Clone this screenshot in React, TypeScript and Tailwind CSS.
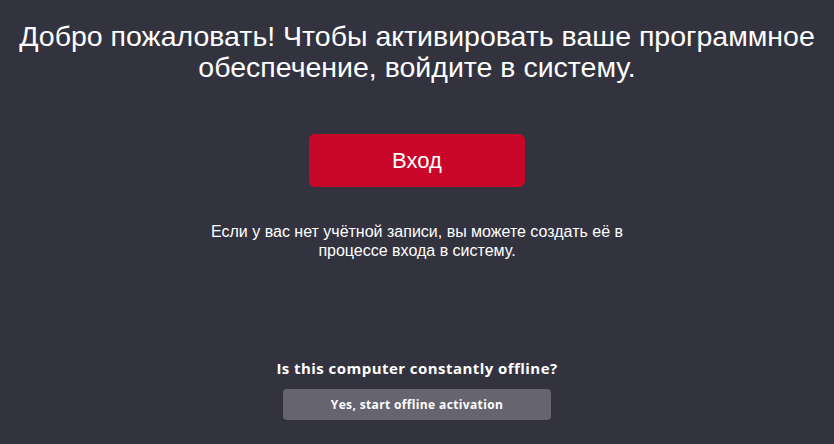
export default function App() {
  return (
    <div className="flex h-[444px] w-full flex-col items-center bg-[#33333f] text-white">
      <h1 className="mt-[21px] text-center font-['Liberation_Sans',Arial,sans-serif] text-[28.5px] leading-[31px] text-white">
        Добро пожаловать! Чтобы активировать ваше программное обеспечение, войдите в систему.
      </h1>
      <button className="mt-[51px] h-[53px] w-[216px] rounded-[6px] bg-[#c8062a] font-['Liberation_Sans',Arial,sans-serif] text-[22px] text-white">
        Вход
      </button>
      <p className="mt-[35px] w-[440px] text-center font-['Liberation_Sans',Arial,sans-serif] text-[16px] leading-[19px] text-white">
        Если у вас нет учётной записи, вы можете создать её в процессе входа в систему.
      </p>
      <div className="mt-auto mb-[24px] flex flex-col items-center font-['Open_Sans',sans-serif]">
        <p className="text-[15px] font-bold tracking-[0.03em]">Is this computer constantly offline?</p>
        <button className="mt-[10px] h-[31px] w-[268px] rounded-[4px] bg-[#66646f] text-[12px] font-bold tracking-[0.03em] text-white">
          Yes, start offline activation
        </button>
      </div>
    </div>
  )
}
